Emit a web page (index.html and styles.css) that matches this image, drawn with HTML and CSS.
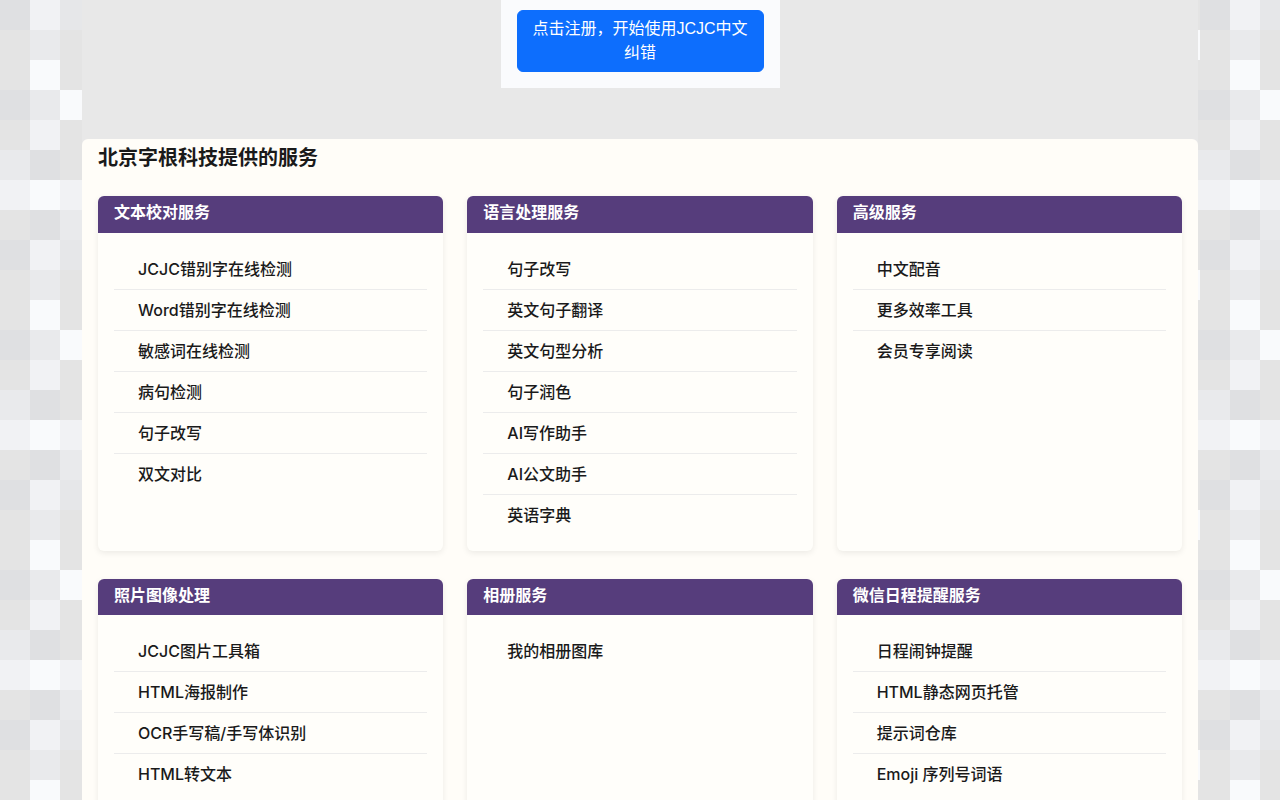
FILE: index.html
```html
<!DOCTYPE html>
<html lang="en">

<head>
    <meta charset="UTF-8">
    <meta name="viewport" content="width=device-width, initial-scale=1.0">
    <title>JCJC中文纠错</title>
    <link rel="stylesheet" href="styles.css">
</head>

<body>

    <!-- mosaic page background -->
    <svg class="mosaic" width="1280" height="800">
        <defs>
            <pattern id="tile" width="240" height="240" patternUnits="userSpaceOnUse">
                <rect class="c3" width="240" height="240" />
                <rect class="c1" x="0" y="0" width="30" height="30" />
                <rect class="c1" x="0" y="90" width="30" height="30" />
                <rect class="c4" x="0" y="150" width="30" height="30" />
                <rect class="c5" x="0" y="180" width="30" height="30" />
                <rect class="c5" x="30" y="0" width="30" height="30" />
                <rect class="c4" x="30" y="30" width="30" height="30" />
                <rect class="c6" x="30" y="60" width="30" height="30" />
                <rect class="c4" x="30" y="90" width="30" height="30" />
                <rect class="c5" x="30" y="120" width="30" height="30" />
                <rect class="c1" x="30" y="150" width="30" height="30" />
                <rect class="c6" x="30" y="180" width="30" height="30" />
                <rect class="c1" x="30" y="210" width="30" height="30" />
                <rect class="c2" x="60" y="0" width="30" height="30" />
                <rect class="c6" x="60" y="90" width="30" height="30" />
                <rect class="c5" x="60" y="180" width="30" height="30" />
                <rect class="c4" x="60" y="210" width="30" height="30" />
                <rect class="c6" x="210" y="30" width="30" height="30" />
                <rect class="c1" x="210" y="90" width="30" height="30" />
                <rect class="c4" x="210" y="150" width="30" height="30" />
                <rect class="c5" x="210" y="180" width="30" height="30" />
            </pattern>
        </defs>
        <rect width="1280" height="800" fill="url(#tile)" />
    </svg>

    <div class="container">
        <div class="register-box">
            <button class="register-btn">点击注册，开始使用JCJC中文纠错</button>
        </div>

        <section class="services">
            <h2>北京字根科技提供的服务</h2>

            <div class="card-grid">
                <div class="card">
                    <div class="card-header">文本校对服务</div>
                    <ul class="card-list">
                        <li>JCJC错别字在线检测</li>
                        <li>Word错别字在线检测</li>
                        <li>敏感词在线检测</li>
                        <li>病句检测</li>
                        <li>句子改写</li>
                        <li>双文对比</li>
                    </ul>
                </div>

                <div class="card">
                    <div class="card-header">语言处理服务</div>
                    <ul class="card-list">
                        <li>句子改写</li>
                        <li>英文句子翻译</li>
                        <li>英文句型分析</li>
                        <li>句子润色</li>
                        <li>AI写作助手</li>
                        <li>AI公文助手</li>
                        <li>英语字典</li>
                    </ul>
                </div>

                <div class="card">
                    <div class="card-header">高级服务</div>
                    <ul class="card-list">
                        <li>中文配音</li>
                        <li>更多效率工具</li>
                        <li>会员专享阅读</li>
                    </ul>
                </div>

                <div class="card">
                    <div class="card-header">照片图像处理</div>
                    <ul class="card-list">
                        <li>JCJC图片工具箱</li>
                        <li>HTML海报制作</li>
                        <li>OCR手写稿/手写体识别</li>
                        <li>HTML转文本</li>
                    </ul>
                </div>

                <div class="card">
                    <div class="card-header">相册服务</div>
                    <ul class="card-list">
                        <li>我的相册图库</li>
                    </ul>
                </div>

                <div class="card">
                    <div class="card-header">微信日程提醒服务</div>
                    <ul class="card-list">
                        <li>日程闹钟提醒</li>
                        <li>HTML静态网页托管</li>
                        <li>提示词仓库</li>
                        <li>Emoji 序列号词语</li>
                    </ul>
                </div>
            </div>
        </section>
    </div>

</body>

</html>
```

FILE: styles.css
```css
html,
body {
    height: 800px;
    overflow: hidden;
}

body {
    margin: 0;
    background-color: #e4e4e4;
    font-family: "Liberation Sans", "Noto Sans CJK SC", sans-serif;
    color: #1a1a1a;
}

.mosaic {
    position: absolute;
    left: 0;
    top: 0;
}

.c1 { fill: #dfe0e2; }
.c2 { fill: #e6e7e9; }
.c3 { fill: #e4e4e4; }
.c4 { fill: #e9eaec; }
.c5 { fill: #f1f2f4; }
.c6 { fill: #f9fafc; }

.container {
    position: relative;
    width: 1116px;
    margin: 0 auto;
    background-color: #e8e8e8;
}

.register-box {
    width: 247px;
    margin: 0 auto;
    padding: 10px 16px 16px;
    background-color: #fafbfd;
}

.register-btn {
    display: block;
    width: 100%;
    padding: 6px 12px;
    border: 1px solid #0d6efd;
    border-radius: 6px;
    background-color: #0d6efd;
    color: #fff;
    font-family: inherit;
    font-size: 16px;
    line-height: 24px;
}

.services {
    margin-top: 51px;
    padding: 7px 16px 28px;
    border-radius: 6px;
    background-color: #fffdf8;
}

.services h2 {
    margin: 0 0 26px;
    font-size: 20px;
    line-height: 24px;
    font-weight: 700;
}

.card-grid {
    display: grid;
    grid-template-columns: repeat(3, 1fr);
    column-gap: 24px;
    row-gap: 28px;
}

.card {
    border-radius: 6px;
    background-color: #fffefa;
    box-shadow: 0 2px 6px rgba(0, 0, 0, 0.08);
}

.card-header {
    height: 31.5px;
    padding: 5px 16px 0;
    border-radius: 6px 6px 0 0;
    background-color: #563d7c;
    color: #fff;
    font-size: 16px;
    line-height: 24px;
    font-weight: 700;
}

.card-list {
    margin: 0;
    padding: 16px;
    list-style: none;
}

.card-list li {
    padding: 8px 24px;
    border-bottom: 1px solid #ececec;
    font-family: Inter, "Noto Sans CJK SC", sans-serif;
    font-size: 16px;
    line-height: 24px;
    font-weight: 500;
}

.card-list li:last-child {
    border-bottom: none;
}
```
